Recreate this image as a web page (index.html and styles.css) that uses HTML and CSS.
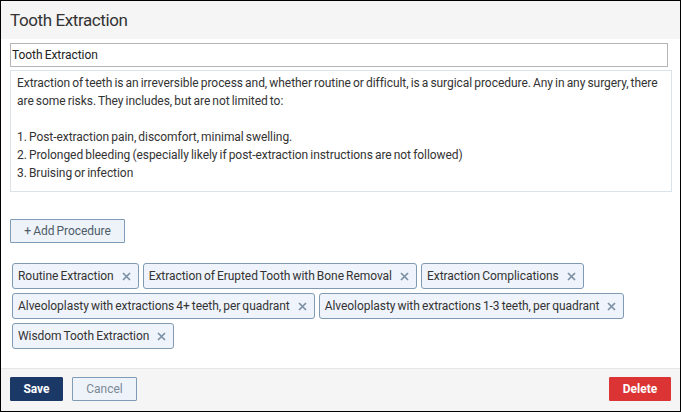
FILE: index.html
```html
<!DOCTYPE html>
<html>
<head>
<meta charset="utf-8">
<link rel="stylesheet" href="styles.css">
</head>
<body>
<div class="frame">
  <div class="header"><h1 class="title">Tooth Extraction</h1></div>
  <div class="main">
    <div class="input">Tooth Extraction</div>
    <div class="textarea">
      <p class="line">Extraction of teeth is an irreversible process and, whether routine or difficult, is a surgical procedure. Any in any surgery, there are some risks. They includes, but are not limited to:</p>
      <p class="line blank">&nbsp;</p>
      <p class="line">1. Post-extraction pain, discomfort, minimal swelling.</p>
      <p class="line">2. Prolonged bleeding (especially likely if post-extraction instructions are not followed)</p>
      <p class="line">3. Bruising or infection</p>
    </div>
    <button class="add-btn">+ Add Procedure</button>
    <div class="chips">
      <span class="chip">Routine Extraction<svg class="x" viewBox="0 0 9 9"><path d="M1 1L8 8M8 1L1 8"/></svg></span>
      <span class="chip">Extraction of Erupted Tooth with Bone Removal<svg class="x" viewBox="0 0 9 9"><path d="M1 1L8 8M8 1L1 8"/></svg></span>
      <span class="chip">Extraction Complications<svg class="x" viewBox="0 0 9 9"><path d="M1 1L8 8M8 1L1 8"/></svg></span>
      <span class="chip">Alveoloplasty with extractions 4+ teeth, per quadrant<svg class="x" viewBox="0 0 9 9"><path d="M1 1L8 8M8 1L1 8"/></svg></span>
      <span class="chip">Alveoloplasty with extractions 1-3 teeth, per quadrant<svg class="x" viewBox="0 0 9 9"><path d="M1 1L8 8M8 1L1 8"/></svg></span>
      <span class="chip">Wisdom Tooth Extraction<svg class="x" viewBox="0 0 9 9"><path d="M1 1L8 8M8 1L1 8"/></svg></span>
    </div>
  </div>
  <div class="footer">
    <button class="btn save">Save</button>
    <button class="btn cancel">Cancel</button>
    <button class="btn delete">Delete</button>
  </div>
</div>
</body>
</html>
```
FILE: styles.css
```css
* { box-sizing: border-box; }
html, body { margin: 0; padding: 0; background: #fff; }
body { font-family: Roboto, "Liberation Sans", sans-serif; color: #333; }
.frame {
  width: 681px;
  height: 412px;
  border: 1px solid #000;
  display: flex;
  flex-direction: column;
  background: #fff;
}
.header {
  height: 38px;
  background: #f5f5f5;
  padding-left: 9px;
  display: flex;
  align-items: center;
}
.title {
  margin: 0;
  font-size: 17px;
  font-weight: 400;
  color: #333;
  letter-spacing: -0.4px;
}
.main { padding: 0 9px; }
.input {
  margin-top: 4px;
  width: 658px;
  height: 24px;
  border: 1px solid #b5b5b5;
  font-size: 12px;
  letter-spacing: -0.05px;
  word-spacing: -0.8px;
  padding: 0 1px;
  line-height: 22px;
  color: #222;
}
.textarea {
  margin-top: 3px;
  width: 662px;
  height: 122px;
  border: 1px solid #dae3ea;
  padding: 3px 2px 3px 6px;
  font-size: 12px;
  letter-spacing: -0.05px;
  word-spacing: -0.8px;
  line-height: 18px;
  color: #333;
}
.line { margin: 0; }
.add-btn {
  display: block;
  margin-top: 27px;
  width: 115px;
  height: 24px;
  background: #eef3fa;
  border: 1px solid #7f9cb6;
  border-radius: 1px;
  font-family: inherit;
  font-size: 12px;
  letter-spacing: -0.05px;
  word-spacing: -0.8px;
  color: #4d5b68;
  padding: 0;
}
.chips {
  margin-top: 20px;
  margin-left: 2px;
  display: flex;
  flex-wrap: wrap;
  gap: 4px 4px;
  width: 650px;
}
.chip {
  height: 26px;
  display: inline-flex;
  align-items: center;
  padding: 0 7px 0 5px;
  background: #eff3fb;
  border: 1px solid #7f9ab2;
  border-radius: 3px;
  font-size: 12px;
  letter-spacing: -0.05px;
  word-spacing: -0.8px;
  color: #333;
  white-space: nowrap;
}
.x {
  margin-left: 8px;
  width: 9px;
  height: 9px;
  stroke: #7c90a3;
  stroke-width: 1.7;
  fill: none;
  flex: none;
}
.footer {
  margin-top: auto;
  height: 43px;
  background: #f5f5f5;
  border-top: 1px solid #e6e6e6;
  display: flex;
  align-items: center;
  padding: 0 9px 2px 9px;
  gap: 9px;
}
.btn {
  height: 24px;
  font-family: inherit;
  font-size: 12px;
  padding: 0;
  border-radius: 1px;
}
.save {
  width: 53px;
  background: #1b3966;
  border: 1px solid #1b3966;
  color: #fff;
  font-weight: 700;
}
.cancel {
  width: 65px;
  background: #eef3fa;
  border: 1px solid #7f9cb6;
  color: #7b8896;
}
.delete {
  margin-left: auto;
  width: 62px;
  background: #dc3434;
  border: 1px solid #dc3434;
  color: #fff;
  font-weight: 700;
}
```
